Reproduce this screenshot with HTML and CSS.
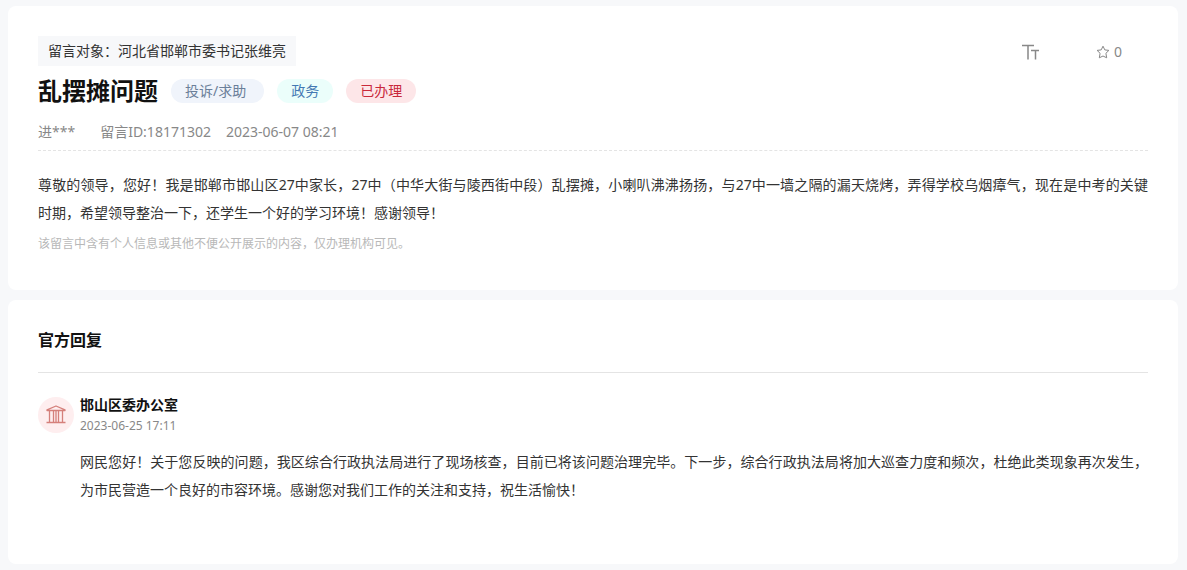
FILE: index.html
```
<!DOCTYPE html>
<html lang="zh-CN">
<head>
    <meta charset="UTF-8">
    <meta name="viewport" content="width=device-width, initial-scale=1.0">
    <title>乱摆摊问题</title>
    <link rel="stylesheet" href="styles.css">
</head>
<body>
    <main class="page">
        <section class="card message">
            <div class="topbar">
                <p class="target">留言对象：河北省邯郸市委书记张维亮</p>
                <div class="tools">
                    <button type="button" class="tool" aria-label="字号">
                        <svg width="18" height="17" viewBox="0 0 18 17" fill="none" stroke="currentColor" stroke-width="1.5">
                            <path d="M0 1.5H12M6 1.5V15.5M9 6.5H17M13.5 6.5V15.5"/>
                        </svg>
                    </button>
                    <button type="button" class="tool">
                        <svg width="14" height="14" viewBox="0 0 14 14" fill="none" stroke="currentColor" stroke-linejoin="round">
                            <path d="M7 1.2L8.8 4.9L12.9 5.4L9.9 8.3L10.7 12.8L7 11L3.3 12.8L4.1 8.3L1.1 5.4L5.2 4.9Z"/>
                        </svg>
                        <span>0</span>
                    </button>
                </div>
            </div>
            <div class="heading">
                <h1>乱摆摊问题</h1>
                <span class="tag tag-type">投诉/求助</span>
                <span class="tag tag-field">政务</span>
                <span class="tag tag-status">已办理</span>
            </div>
            <div class="meta">
                <span class="author">进***</span>
                <span>留言ID:18171302</span>
                <span>2023-06-07 08:21</span>
            </div>
            <p class="text">尊敬的领导，您好！我是邯郸市邯山区27中家长，27中（中华大街与陵西街中段）乱摆摊，小喇叭沸沸扬扬，与27中一墙之隔的漏天烧烤，弄得学校乌烟瘴气，现在是中考的关键时期，希望领导整治一下，还学生一个好的学习环境！感谢领导！</p>
            <p class="notice">该留言中含有个人信息或其他不便公开展示的内容，仅办理机构可见。</p>
        </section>

        <section class="card reply">
            <h2>官方回复</h2>
            <div class="reply-item">
                <span class="avatar">
                    <svg width="20" height="20" viewBox="0 0 20 20" fill="none" stroke="currentColor" stroke-width="1.3" stroke-linejoin="round">
                        <path d="M1 4.8L10 1L19 4.8V5.5H1Z"/>
                        <path d="M3.5 5.5V17.5M7.5 5.5V17.5M10 5.5V17.5M12.5 5.5V17.5M16.5 5.5V17.5M0.5 17.5H19.5"/>
                    </svg>
                </span>
                <div class="reply-body">
                    <h3>邯山区委办公室</h3>
                    <time datetime="2023-06-25T17:11">2023-06-25 17:11</time>
                    <p class="text">网民您好！关于您反映的问题，我区综合行政执法局进行了现场核查，目前已将该问题治理完毕。下一步，综合行政执法局将加大巡查力度和频次，杜绝此类现象再次发生，为市民营造一个良好的市容环境。感谢您对我们工作的关注和支持，祝生活愉快！</p>
                </div>
            </div>
        </section>
    </main>
</body>
</html>
```
FILE: styles.css
```
* {
    box-sizing: border-box;
}
body {
    margin: 0;
    background: #f7f8fa;
    color: #333;
    font-family: "Noto Sans", "Noto Sans CJK SC", sans-serif;
    font-size: 14px;
    line-height: 20px;
}
h1, h2, h3, p {
    margin: 0;
}
.page {
    display: flex;
    flex-direction: column;
    gap: 10px;
    padding: 6px 9px 6px 8px;
}
.card {
    background: #fff;
    border-radius: 8px;
    padding: 30px;
}
.message {
    padding-bottom: 36px;
}
.topbar {
    display: flex;
    justify-content: space-between;
    align-items: center;
}
.target {
    background: #f7f8fa;
    padding: 5px 10px;
}
.tools {
    display: flex;
    align-items: center;
    gap: 56px;
    padding: 2px 26px 0 0;
}
.tool {
    display: flex;
    align-items: center;
    gap: 4px;
    padding: 0;
    border: none;
    background: none;
    color: #888;
    font: inherit;
    cursor: pointer;
}
.heading {
    display: flex;
    align-items: center;
    gap: 13px;
    margin-top: 8px;
}
h1 {
    color: #111;
    font-size: 24px;
    line-height: 34px;
}
.tag {
    padding: 0 14px;
    border-radius: 12px;
    line-height: 24px;
}
.tag-type {
    padding-right: 18px;
    background: #f0f4fb;
    color: #6b7f99;
}
.tag-field {
    background: #ebfefb;
    color: #4479b3;
}
.tag-status {
    background: #fde6e8;
    color: #c9283a;
}
.meta {
    display: flex;
    gap: 15px;
    margin-top: 14px;
    padding-bottom: 8px;
    border-bottom: 1px dashed #e4e4e4;
    color: #888;
}
.author {
    margin-right: 10px;
}
.text {
    line-height: 28px;
    text-align: justify;
}
.message .text {
    margin-top: 20px;
}
.notice {
    margin-top: 7px;
    color: #b8b8b8;
    font-size: 12px;
}
.reply {
    padding-bottom: 60px;
}
h2 {
    padding-bottom: 22px;
    border-bottom: 1px solid #e4e4e4;
    color: #111;
    font-size: 16px;
    line-height: 20px;
}
.reply-item {
    display: flex;
    gap: 6px;
    margin-top: 24px;
}
.avatar {
    flex: none;
    display: flex;
    align-items: center;
    justify-content: center;
    width: 36px;
    height: 36px;
    border-radius: 50%;
    background: #feeeef;
    color: #d5807b;
}
.reply-body {
    flex: 1;
}
h3 {
    color: #111;
    font-size: 14px;
    line-height: 16px;
}
time {
    display: block;
    margin-top: 3px;
    color: #888;
    font-size: 12px;
}
.reply .text {
    margin-top: 12px;
}
```
